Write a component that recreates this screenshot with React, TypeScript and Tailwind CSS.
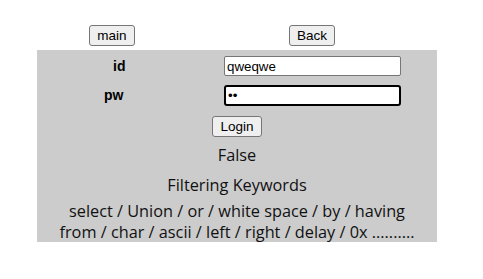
import React from 'react';

const btn =
  "h-[21px] px-[7px] rounded-[3px] border border-[#767676] bg-[#efefef] text-[13.5px] leading-none text-black";

export default function App() {
  return (
    <div className="w-[483px] h-[279px] bg-white" style={{ fontFamily: '"Liberation Sans", Arial, sans-serif' }}>
      {/* top buttons */}
      <div className="ml-[12px] w-[400px] pt-[25px] flex">
        <div className="w-[200px] flex justify-center">
          <button className={btn}>main</button>
        </div>
        <div className="w-[200px] flex justify-center">
          <button className={btn}>Back</button>
        </div>
      </div>

      {/* login box */}
      <div className="mt-[4px] ml-[37px] w-[400px] h-[192px] bg-[#cccccc] pt-[6px]">
        <div className="flex items-center h-[20px]">
          <span className="pl-[76px] w-[187px] font-bold text-[14px] text-black">id</span>
          <input
            readOnly
            defaultValue="qweqwe"
            className="w-[177px] h-[20px] px-[2px] border border-[#767676] rounded-[2px] bg-white text-[13.33px] text-black outline-none"
          />
        </div>
        <div className="flex items-center h-[21px] mt-[9px]">
          <span className="pl-[67px] w-[187px] font-bold text-[14px] text-black">pw</span>
          <input
            readOnly
            type="password"
            defaultValue="ab"
            className="w-[177px] h-[21px] px-[2px] border-2 border-black rounded-[3px] bg-white text-[13.33px] text-black outline-none"
          />
        </div>
        <div className="flex justify-center mt-[10px]">
          <button className={btn}>Login</button>
        </div>
        <div className="text-center text-[#111] text-[16.3px] leading-[21px]" style={{ fontFamily: '"Open Sans", "Noto Sans CJK KR", sans-serif' }}>
          <p className="mt-[8px]">False</p>
          <p className="mt-[9px]">Filtering Keywords</p>
          <p className="mt-[5px]">select / Union / or / white space / by / having</p>
          <p>from / char / ascii / left / right / delay / 0x ..........</p>
        </div>
      </div>
    </div>
  );
}
